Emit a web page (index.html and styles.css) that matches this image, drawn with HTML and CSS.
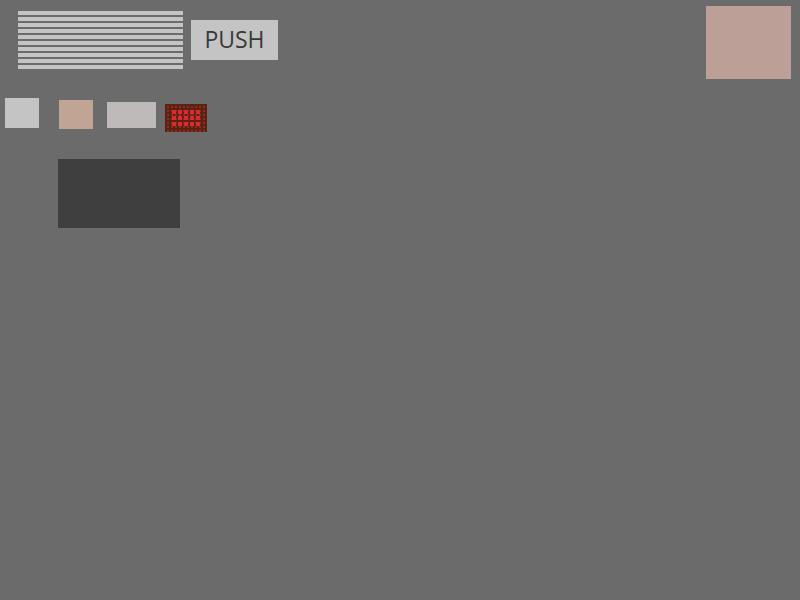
FILE: index.html
```html
<!DOCTYPE html>
<html lang="en">
<head>
<meta charset="utf-8">
<title>Push</title>
<link rel="stylesheet" href="styles.css">
</head>
<body>
<header class="top">
  <div class="stripes"></div>
  <button class="push" type="button">PUSH</button>
  <div class="panel"></div>
</header>
<main>
  <div class="row">
    <div class="swatch"></div>
    <div class="swatch tan"></div>
    <div class="swatch wide"></div>
    <svg class="lamp" width="42" height="28" viewBox="0 0 42 28" shape-rendering="crispEdges" aria-hidden="true">
      <defs>
        <pattern id="dots" width="4" height="4" patternUnits="userSpaceOnUse">
          <rect x="2" y="2" width="2" height="2" fill="#853020"/>
        </pattern>
        <pattern id="lights" width="6" height="6" patternUnits="userSpaceOnUse" x="1">
          <rect width="4" height="4" fill="#de2930"/>
        </pattern>
      </defs>
      <rect width="42" height="28" fill="#5c2014"/>
      <rect width="42" height="28" fill="url(#dots)"/>
      <rect x="7" y="6" width="28" height="16" fill="url(#lights)"/>
    </svg>
  </div>
  <div class="screen"></div>
</main>
</body>
</html>
```
FILE: styles.css
```css
body {
  margin: 0;
  background: #6b6b6b;
  font-family: "Noto Sans", "Open Sans", sans-serif;
}

.top {
  display: flex;
  align-items: flex-start;
  gap: 8px;
  padding: 6px 9px 0 18px;
}

.stripes {
  width: 165px;
  height: 58px;
  margin-top: 5px;
  background: repeating-linear-gradient(#c4c4c4 0 4px, #6b6b6b 4px 6px);
}

.push {
  width: 87px;
  height: 40px;
  margin: 14px 0 0;
  padding: 0 0 2px;
  border: 0;
  background: #c4c4c4;
  color: #383838;
  font: 23px/38px "Open Sans", "Noto Sans", sans-serif;
}

.panel {
  width: 85px;
  height: 73px;
  margin-left: auto;
  background: #bca098;
}

.row {
  display: flex;
  align-items: flex-start;
  padding: 19px 0 0 5px;
}

.swatch {
  width: 34px;
  height: 30px;
  background: #c4c4c4;
}

.tan {
  height: 29px;
  margin: 2px 14px 0 20px;
  background: #c0a494;
}

.wide {
  width: 49px;
  height: 26px;
  margin: 4px 9px 0 0;
  background: #bebab9;
}

.lamp {
  display: block;
  margin-top: 6px;
}

.screen {
  width: 122px;
  height: 69px;
  margin: 27px 0 0 58px;
  background: #3f3f3f;
}
```
